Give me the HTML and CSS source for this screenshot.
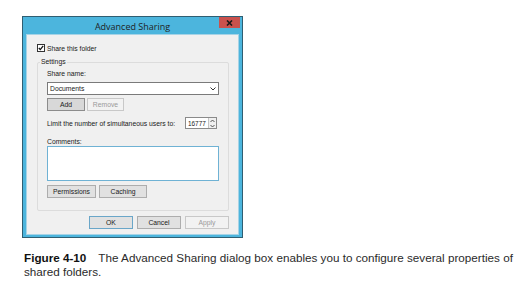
FILE: index.html
```html
<!DOCTYPE html>
<html>
<head>
<meta charset="utf-8">
<link rel="stylesheet" href="styles.css">
</head>
<body>
<div class="dialog">
  <div class="titlebar">
    <span class="title">Advanced Sharing</span>
    <div class="close"><svg width="7" height="6" viewBox="0 0 7 6"><path d="M1 0.5 L6 5.5 M6 0.5 L1 5.5" stroke="#1a1a1a" stroke-width="1.6"/></svg></div>
  </div>
  <div class="client">
    <div class="check-row">
      <span class="checkbox"><svg width="6" height="6" viewBox="0 0 6 6"><path d="M0.8 3 L2.3 4.6 L5.2 0.9" fill="none" stroke="#111" stroke-width="1.3"/></svg></span>
      <span>Share this folder</span>
    </div>
    <div class="group">
      <span class="legend">Settings</span>
      <div class="label">Share name:</div>
      <div class="select"><span>Documents</span><svg width="6" height="4" viewBox="0 0 6 4"><path d="M0.5 0.5 L3 3 L5.5 0.5" fill="none" stroke="#333" stroke-width="1"/></svg></div>
      <div class="btn-row">
        <div class="btn add">Add</div>
        <div class="btn disabled remove">Remove</div>
      </div>
      <div class="limit-row">
        <span>Limit the number of simultaneous users to:</span>
        <div class="spinner"><span class="num">16777</span><span class="arrows"><svg width="5" height="9" viewBox="0 0 5 9"><path d="M0.5 3 L2.5 1 L4.5 3 M0.5 6 L2.5 8 L4.5 6" fill="none" stroke="#444" stroke-width="0.9"/></svg></span></div>
      </div>
      <div class="label comments">Comments:</div>
      <div class="textarea"></div>
      <div class="btn-row perm-row">
        <div class="btn perm">Permissions</div>
        <div class="btn caching">Caching</div>
      </div>
    </div>
    <div class="footer">
      <div class="btn ok">OK</div>
      <div class="btn cancel">Cancel</div>
      <div class="btn disabled apply">Apply</div>
    </div>
  </div>
</div>
<div class="caption">
  <div class="cap-line"><b class="fig">Figure 4-10</b><span>The Advanced Sharing dialog box enables you to configure several properties of</span></div>
  <div class="cap-line">shared folders.</div>
</div>
</body>
</html>
```
FILE: styles.css
```css
html, body {
  margin: 0;
  padding: 0;
  background: #ffffff;
}
body {
  padding: 16px 0 0 22px;
  font-family: "Liberation Sans", "Open Sans", sans-serif;
}
.dialog {
  width: 219px;
  height: 220px;
  border: 1px solid #2f5e72;
  background: #4cb5dd;
  display: flex;
  flex-direction: column;
  position: relative;
}
.titlebar {
  height: 17px;
  display: flex;
  align-items: center;
  justify-content: center;
  flex: none;
}
.title {
  font-family: "Open Sans", sans-serif;
  font-size: 9px;
  color: #1f1f1f;
  margin-top: 1px;
}
.close {
  position: absolute;
  top: 0;
  right: 2px;
  width: 21px;
  height: 11px;
  background: #c9514d;
  display: flex;
  align-items: center;
  justify-content: center;
}
.client {
  flex: 1;
  margin: 0 3px 2px 3px;
  background: #f0f0f0;
  border: 1px solid #a6d3e6;
  font-size: 6.8px;
  color: #1a1a1a;
  display: flex;
  flex-direction: column;
  padding: 0 9px 0 10px;
}
.check-row {
  display: flex;
  align-items: center;
  gap: 1px;
  margin-top: 9px;
  height: 8px;
}
.checkbox {
  width: 6px;
  height: 6px;
  border: 0.5px solid #333;
  background: #fff;
  display: flex;
  align-items: center;
  justify-content: center;
  margin-right: 1px;
}
.group {
  margin-top: 10px;
  border: 1px solid #dcdcdc;
  border-radius: 2px;
  height: 140px;
  position: relative;
  padding: 7px 9px 0 9px;
  display: flex;
  flex-direction: column;
}
.legend {
  position: absolute;
  top: -5px;
  left: 2px;
  background: #f0f0f0;
  padding: 0 1px;
  line-height: 8px;
}
.label {
  line-height: 8px;
}
.select {
  margin-top: 4px;
  height: 11px;
  border: 1px solid #7a7a7a;
  background: #fff;
  display: flex;
  align-items: center;
  justify-content: space-between;
  padding: 0 2px 0 2px;
}
.btn-row {
  display: flex;
  gap: 2px;
  margin-top: 3px;
}
.btn {
  height: 11px;
  border: 1px solid #adadad;
  background: #e1e1e1;
  display: flex;
  align-items: center;
  justify-content: center;
}
.btn.disabled {
  color: #9a9a9a;
  border-color: #c8c8c8;
  background: #f2f2f2;
}
.add { width: 36px; background: #d8d8d8; border-color: #8c8c8c; }
.remove { width: 35px; }
.limit-row {
  display: flex;
  align-items: center;
  justify-content: space-between;
  margin-top: 6px;
  padding-right: 2px;
}
.spinner {
  width: 30px;
  height: 10px;
  border: 1px solid #8a8a8a;
  background: #fff;
  display: flex;
  align-items: center;
  justify-content: space-between;
}
.num {
  padding-left: 2px;
  font-size: 6.4px;
}
.arrows {
  width: 7px;
  height: 10px;
  border-left: 1px solid #c4c4c4;
  background: #efefef;
  display: flex;
  align-items: center;
  justify-content: center;
}
.comments {
  margin-top: 9px;
}
.textarea {
  margin-top: 0;
  height: 33px;
  border: 1px solid #6fb2d4;
  background: #fff;
}
.perm-row {
  margin-top: 4px;
  gap: 3px;
}
.perm { width: 47px; }
.caching { width: 46px; }
.footer {
  display: flex;
  justify-content: flex-end;
  gap: 4px;
  margin-top: 5px;
}
.ok { width: 42px; height: 11px; border-color: #6aa6c8; }
.cancel { width: 42px; height: 11px; }
.apply { width: 42px; height: 11px; }
.caption {
  margin: 13px 0 0 2px;
  font-family: "Liberation Sans", Arial, sans-serif;
  font-size: 11.7px;
  line-height: 14px;
  color: #2b2b2b;
}
.cap-line {
  white-space: nowrap;
}
.fig {
  color: #111;
  margin-right: 12px;
}
```
